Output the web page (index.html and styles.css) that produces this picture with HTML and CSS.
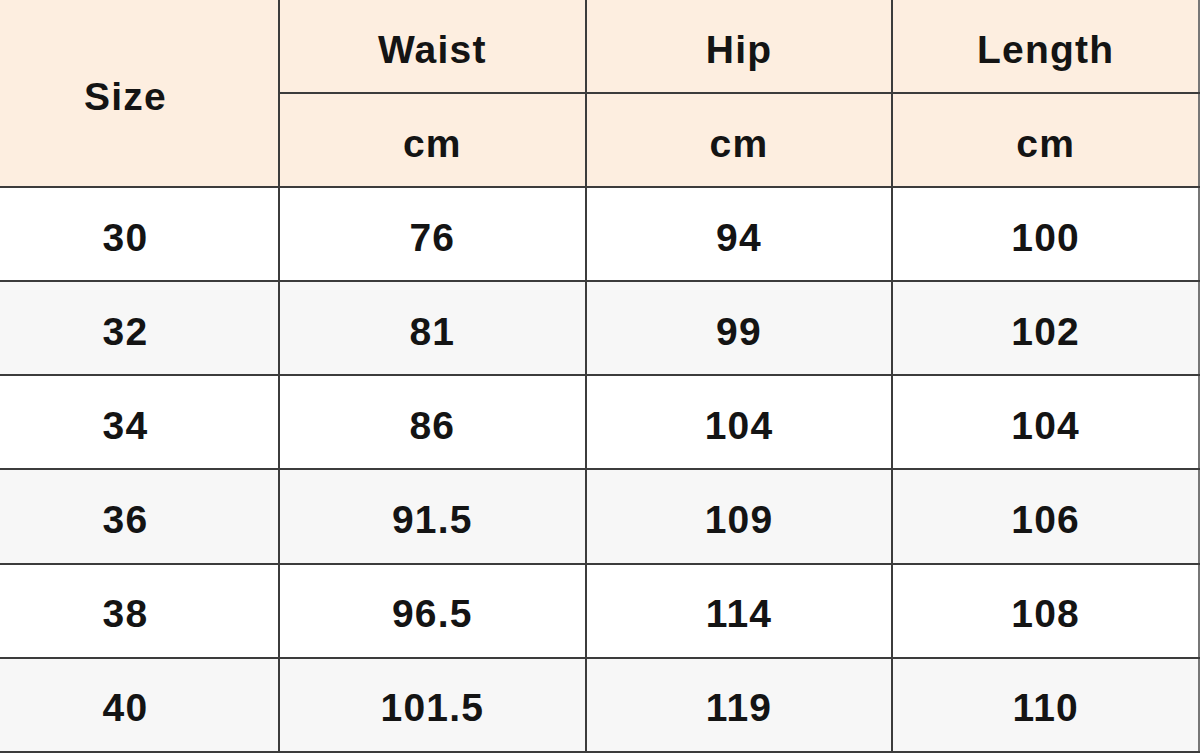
FILE: index.html
```html
<!DOCTYPE html>
<html>
<head>
<meta charset="utf-8">
<link rel="stylesheet" href="styles.css">
</head>
<body>
<table class="size-table">
  <colgroup>
    <col class="c1"><col class="c2"><col class="c2"><col class="c2">
  </colgroup>
  <thead>
    <tr><th rowspan="2">Size</th><th>Waist</th><th>Hip</th><th>Length</th></tr>
    <tr><th>cm</th><th>cm</th><th>cm</th></tr>
  </thead>
  <tbody>
    <tr><td>30</td><td>76</td><td>94</td><td>100</td></tr>
    <tr class="alt"><td>32</td><td>81</td><td>99</td><td>102</td></tr>
    <tr><td>34</td><td>86</td><td>104</td><td>104</td></tr>
    <tr class="alt"><td>36</td><td>91.5</td><td>109</td><td>106</td></tr>
    <tr><td>38</td><td>96.5</td><td>114</td><td>108</td></tr>
    <tr class="alt"><td>40</td><td>101.5</td><td>119</td><td>110</td></tr>
  </tbody>
</table>
</body>
</html>
```
FILE: styles.css
```css
html, body {
  margin: 0;
  padding: 0;
  background: #ffffff;
  overflow: hidden;
}
.size-table {
  width: 1227px;
  margin-left: -27px;
  border-collapse: collapse;
  table-layout: fixed;
  font-family: "Liberation Sans", Arial, sans-serif;
  font-weight: 700;
  color: #141414;
  font-size: 39px;
  letter-spacing: 1.2px;
}
.c1 { width: 306px; }
.size-table th, .size-table td {
  border: 2px solid #3c3c3c;
  text-align: center;
  vertical-align: middle;
  padding: 6px 0 0;
  height: 86.1px;
  line-height: 1;
}
.size-table th {
  background: #fdeee0;
  font-weight: 700;
}
.size-table tr:first-child th { border-top: none; }
.size-table th:first-child, .size-table td:first-child { border-left: none; }
.size-table th:last-child, .size-table td:last-child { border-right: 2px solid #777; }
.size-table tr.alt td { background: #f7f7f7; }
```
